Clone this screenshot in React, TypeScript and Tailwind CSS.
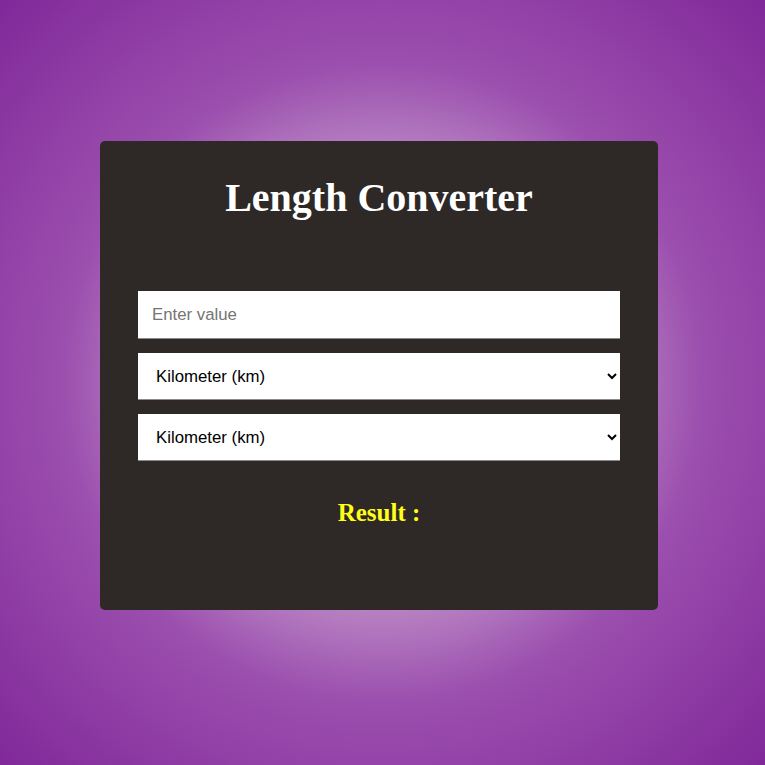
import React from "react";

export default function App() {
  return (
    <div className="w-[765px] h-[765px] overflow-hidden bg-[radial-gradient(circle_farthest-corner_at_center,#dcbcdc_0%,#c89cce_28%,#b47cc0_44%,#9b4fae_59%,#9444a8_71%,#80289a_100%)] pt-[141px] pl-[100px]">
      <div className="w-[558px] h-[469px] rounded-[5px] bg-[#2e2826] flex flex-col px-[38px] pt-[35px]">
        <h1 className="text-center text-white font-bold text-[40px] leading-[44px] [font-family:'Liberation_Serif',serif]">
          Length Converter
        </h1>
        <div className="mt-[71px] flex flex-col gap-[14px] [font-family:'Liberation_Sans',Arial,sans-serif]">
          <input
            type="text"
            placeholder="Enter value"
            className="h-[48px] w-full bg-white text-[16.8px] text-black px-[14px] border-b border-[#8a8a8a] outline-none placeholder:text-[#757575]"
          />
          <select className="h-[47px] w-full bg-white text-[16.8px] text-black pl-[14px] pr-[8px] border-b border-[#8a8a8a] outline-none" defaultValue="km">
            <option value="km">Kilometer (km)</option>
          </select>
          <select className="h-[47px] w-full bg-white text-[16.8px] text-black pl-[14px] pr-[8px] border-b border-[#8a8a8a] outline-none" defaultValue="km">
            <option value="km">Kilometer (km)</option>
          </select>
        </div>
        <div className="mt-[33px] text-center text-[#ffff1a] font-bold text-[25px] [font-family:'Liberation_Serif',serif]">
          Result :
        </div>
      </div>
    </div>
  );
}
